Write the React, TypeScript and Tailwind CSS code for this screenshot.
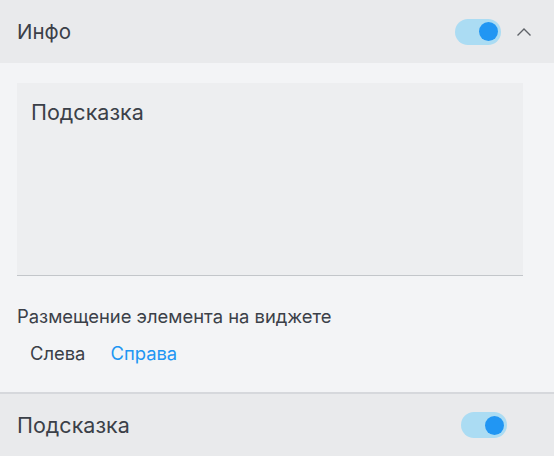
import React, { useState } from 'react';

function Toggle({ on, onChange }: { on: boolean; onChange: () => void }) {
  return (
    <button
      onClick={onChange}
      className={`relative w-[46px] h-[26px] rounded-full ${on ? 'bg-[#abdcf3]' : 'bg-gray-300'}`}
    >
      <span
        className={`absolute top-[3.5px] w-[19px] h-[19px] rounded-full ${on ? 'left-[24px] bg-[#2196f3]' : 'left-[3px] bg-white'}`}
      ></span>
    </button>
  );
}

export default function App() {
  const [info, setInfo] = useState(true);
  const [hint, setHint] = useState(true);
  const [side, setSide] = useState<'left' | 'right'>('right');

  return (
    <div className="w-[554px] h-[456px] bg-[#f3f4f6] text-[#3b4048] overflow-hidden" style={{ fontFamily: 'Inter, "Noto Sans", sans-serif' }}>
      {/* Header */}
      <div className="h-[63px] bg-[#e9eaec] flex items-center pl-[17px] pr-[22px]">
        <span className="text-[20.5px] leading-[28px] flex-1">Инфо</span>
        <Toggle on={info} onChange={() => setInfo(!info)} />
        <svg className="ml-[15px]" width="16" height="10" viewBox="0 0 16 10" fill="none">
          <path d="M1.5 8.5L8 2l6.5 6.5" stroke="#5f6368" strokeWidth="1.4" />
        </svg>
      </div>

      <div className="px-[17px] pt-[20px] pb-[26px]">
        <div className="h-[193px] w-[506px] bg-[#edeef0] border-b border-[#c3c6ca] px-[14px] pt-[14px]">
          <span className="text-[21.5px] leading-[30px]">Подсказка</span>
        </div>
        <div className="mt-[27px] text-[18.4px] leading-[26px]">Размещение элемента на виджете</div>
        <div className="flex gap-[25px] pl-[13px] mt-[11px] text-[18.4px] leading-[26px]">
          <button onClick={() => setSide('left')} className={side === 'left' ? 'text-[#2196f3]' : ''}>Слева</button>
          <button onClick={() => setSide('right')} className={side === 'right' ? 'text-[#2196f3]' : ''}>Справа</button>
        </div>
      </div>

      <div className="border-t-2 border-[#d6d8dc] h-[64px] bg-[#e9eaec] flex items-center pl-[17px] pr-[47px]">
        <span className="text-[21.5px] leading-[30px] flex-1">Подсказка</span>
        <Toggle on={hint} onChange={() => setHint(!hint)} />
      </div>
    </div>
  );
}
